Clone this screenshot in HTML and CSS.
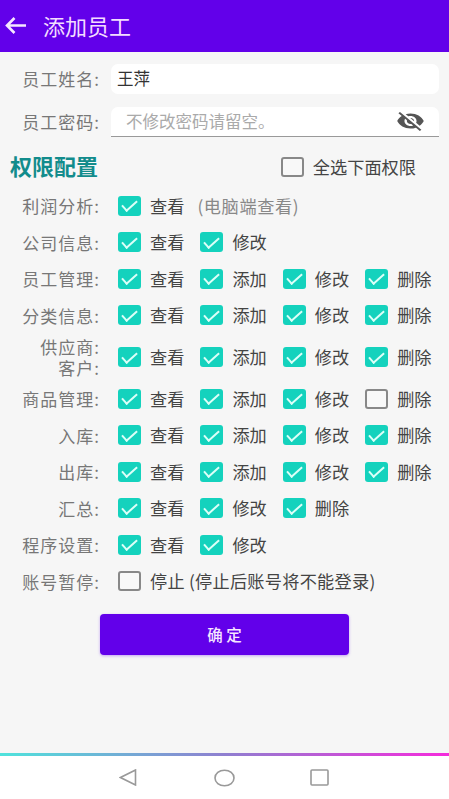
FILE: index.html
```html
<!DOCTYPE html>
<html lang="zh-CN">
<head>
<meta charset="utf-8">
<title>添加员工</title>
<link rel="stylesheet" href="styles.css">
</head>
<body>
<div class="app">
  <header class="topbar">
    <svg class="back" viewBox="0 0 21 17"><path d="M21 8.5H2M9.5 1L2 8.5l7.5 7.5"/></svg>
    <h1>添加员工</h1>
  </header>
  <main class="content">
    <div class="field">
      <label>员工姓名:</label>
      <div class="input">王萍</div>
    </div>
    <div class="field">
      <label>员工密码:</label>
      <div class="input password">
        <span class="placeholder">不修改密码请留空。</span>
        <svg class="eye" viewBox="0 0 24 24" preserveAspectRatio="none"><path d="M12 7c2.76 0 5 2.24 5 5 0 .65-.13 1.26-.36 1.83l2.92 2.92c1.51-1.26 2.7-2.89 3.43-4.75-1.73-4.39-6-7.5-11-7.5-1.4 0-2.74.25-3.98.7l2.16 2.16C10.74 7.13 11.35 7 12 7zM2 4.27l2.28 2.28.46.46C3.08 8.3 1.78 10.02 1 12c1.73 4.39 6 7.5 11 7.5 1.55 0 3.03-.3 4.38-.84l.42.42L19.73 22 21 20.73 3.27 3 2 4.27zM7.53 9.8l1.55 1.55c-.05.21-.08.43-.08.65 0 1.66 1.34 3 3 3 .22 0 .44-.03.65-.08l1.55 1.55c-.67.33-1.41.53-2.2.53-2.76 0-5-2.24-5-5 0-.79.2-1.53.53-2.2zm4.31-.78l3.15 3.15.02-.16c0-1.66-1.34-3-3-3l-.17.01z"/></svg>
      </div>
    </div>
    <div class="section">
      <h2>权限配置</h2>
      <div class="opt selectall"><span class="box"></span><span>全选下面权限</span></div>
    </div>
    <div class="perms">
      <div class="row"><div class="name">利润分析:</div><div class="opts">
        <div class="opt"><span class="box on"></span><span>查看</span></div>
        <span class="hint">(电脑端查看)</span>
      </div></div>
      <div class="row"><div class="name">公司信息:</div><div class="opts">
        <div class="opt"><span class="box on"></span><span>查看</span></div>
        <div class="opt"><span class="box on"></span><span>修改</span></div>
      </div></div>
      <div class="row"><div class="name">员工管理:</div><div class="opts">
        <div class="opt"><span class="box on"></span><span>查看</span></div>
        <div class="opt"><span class="box on"></span><span>添加</span></div>
        <div class="opt"><span class="box on"></span><span>修改</span></div>
        <div class="opt"><span class="box on"></span><span>删除</span></div>
      </div></div>
      <div class="row"><div class="name">分类信息:</div><div class="opts">
        <div class="opt"><span class="box on"></span><span>查看</span></div>
        <div class="opt"><span class="box on"></span><span>添加</span></div>
        <div class="opt"><span class="box on"></span><span>修改</span></div>
        <div class="opt"><span class="box on"></span><span>删除</span></div>
      </div></div>
      <div class="row tall"><div class="name">供应商:<br>客户:</div><div class="opts">
        <div class="opt"><span class="box on"></span><span>查看</span></div>
        <div class="opt"><span class="box on"></span><span>添加</span></div>
        <div class="opt"><span class="box on"></span><span>修改</span></div>
        <div class="opt"><span class="box on"></span><span>删除</span></div>
      </div></div>
      <div class="row"><div class="name">商品管理:</div><div class="opts">
        <div class="opt"><span class="box on"></span><span>查看</span></div>
        <div class="opt"><span class="box on"></span><span>添加</span></div>
        <div class="opt"><span class="box on"></span><span>修改</span></div>
        <div class="opt"><span class="box"></span><span>删除</span></div>
      </div></div>
      <div class="row"><div class="name">入库:</div><div class="opts">
        <div class="opt"><span class="box on"></span><span>查看</span></div>
        <div class="opt"><span class="box on"></span><span>添加</span></div>
        <div class="opt"><span class="box on"></span><span>修改</span></div>
        <div class="opt"><span class="box on"></span><span>删除</span></div>
      </div></div>
      <div class="row"><div class="name">出库:</div><div class="opts">
        <div class="opt"><span class="box on"></span><span>查看</span></div>
        <div class="opt"><span class="box on"></span><span>添加</span></div>
        <div class="opt"><span class="box on"></span><span>修改</span></div>
        <div class="opt"><span class="box on"></span><span>删除</span></div>
      </div></div>
      <div class="row"><div class="name">汇总:</div><div class="opts">
        <div class="opt"><span class="box on"></span><span>查看</span></div>
        <div class="opt"><span class="box on"></span><span>修改</span></div>
        <div class="opt"><span class="box on"></span><span>删除</span></div>
      </div></div>
      <div class="row"><div class="name">程序设置:</div><div class="opts">
        <div class="opt"><span class="box on"></span><span>查看</span></div>
        <div class="opt"><span class="box on"></span><span>修改</span></div>
      </div></div>
      <div class="row"><div class="name">账号暂停:</div><div class="opts">
        <div class="opt wide"><span class="box"></span><span>停止 (停止后账号将不能登录)</span></div>
      </div></div>
    </div>
    <div class="actions"><button class="confirm">确 定</button></div>
  </main>
  <div class="gradient"></div>
  <nav class="navbar">
    <svg class="nav-back" viewBox="0 0 18 17"><path d="M16.5 1L1.5 8.5l15 7.5z"/></svg>
    <svg class="nav-home" viewBox="0 0 21 18"><ellipse cx="10.5" cy="9" rx="9.5" ry="7.8"/></svg>
    <svg class="nav-recent" viewBox="0 0 19 17"><rect x="1" y="1" width="17" height="15" rx="1"/></svg>
  </nav>
</div>
</body>
</html>
```
FILE: styles.css
```css
* { box-sizing: border-box; }
html, body { margin: 0; padding: 0; }
body {
  width: 449px;
  height: 799px;
  overflow: hidden;
  background: #f6f6f6;
  font-family: "Noto Sans CJK SC", "Noto Sans", sans-serif;
  font-size: 16.5px;
  color: #444;
}
.app { display: flex; flex-direction: column; height: 799px; }
.topbar {
  height: 52px;
  flex: none;
  background: #6200ea;
  display: flex;
  align-items: center;
  padding: 0 0 2px 5px;
  gap: 17px;
}
.back { width: 21px; height: 17px; fill: none; stroke: #f6e6ff; stroke-width: 2.6; }
.topbar h1 { margin: 0; font-size: 22px; font-weight: 400; color: #f3dcff; line-height: 30px; }
.content { flex: 1; display: flex; flex-direction: column; padding-top: 12px; }
.field { display: flex; align-items: center; height: 30px; margin-bottom: 13px; }
.field label { width: 100px; text-align: right; color: #777; flex: none; font-size: 17px; letter-spacing: 1px; padding-bottom: 2px; }
.input {
  margin-left: 11px;
  width: 328px;
  height: 30px;
  background: #fff;
  border-radius: 7px;
  padding-left: 6px;
  padding-bottom: 2px;
  display: flex;
  align-items: center;
  color: #333;
}
.password {
  border-bottom: 1.5px solid #999;
  border-radius: 7px 7px 0 0;
  padding-left: 15px;
  padding-right: 14px;
  justify-content: space-between;
}
.placeholder { color: #aaa; }
.eye { width: 29px; height: 24px; fill: #555; }
.section { display: flex; align-items: center; justify-content: space-between; height: 30px; margin-top: 2px; padding-left: 10px; padding-right: 33px; }
.section h2 { margin: 0 0 3px; font-size: 22px; font-weight: 700; color: #128c8c; line-height: 27px; }
.perms { margin-top: 5.5px; }
.row { display: flex; align-items: center; height: 36.5px; }
.row.tall { height: 47px; }
.name { width: 100px; flex: none; text-align: right; color: #777; line-height: 21px; font-size: 17px; letter-spacing: 1px; }
.opts { display: flex; align-items: center; padding-left: 18px; }
.opt { display: flex; align-items: center; gap: 9px; width: 82.4px; flex: none; white-space: nowrap; line-height: 22px; font-size: 17.2px; }
.opt.wide { width: auto; letter-spacing: .25px; }
.selectall.opt { width: auto; }
.hint { color: #888; margin-left: -3px; white-space: nowrap; font-size: 17.2px; letter-spacing: .6px; }
.box {
  width: 23px;
  height: 20px;
  flex: none;
  border: 2px solid #888;
  border-radius: 3px;
  background: #f8f8f8;
  display: flex;
  align-items: center;
  justify-content: center;
}
.box.on { background: #14d2bd; border: none; }
.box.on::after {
  content: "";
  width: 13px;
  height: 6px;
  margin-top: -3px;
  border-left: 2px solid #dcfff8;
  border-bottom: 2px solid #dcfff8;
  transform: rotate(-42deg);
}
.actions { display: flex; justify-content: center; margin-top: 14.5px; }
.confirm {
  width: 249px;
  height: 41px;
  border: none;
  border-radius: 4px;
  background: #6200ea;
  color: #f6e6ff;
  font: 500 15.5px "Noto Sans CJK SC", sans-serif;
  padding-bottom: 3px;
  box-shadow: 0 1px 3px rgba(98, 0, 234, .35);
}
.gradient { height: 3px; flex: none; background: linear-gradient(90deg, #4fe3dc, #8f7fd0 50%, #f52bdc); }
.navbar {
  height: 43px;
  flex: none;
  background: #fff;
  display: flex;
  align-items: center;
  padding: 0 0 0 119px;
}
.navbar svg { fill: none; stroke: #999; stroke-width: 1.6; }
.nav-back { width: 18px; height: 17px; }
.nav-home { width: 21px; height: 18px; margin-left: 77px; }
.nav-recent { width: 19px; height: 17px; margin-left: 75px; }
```
